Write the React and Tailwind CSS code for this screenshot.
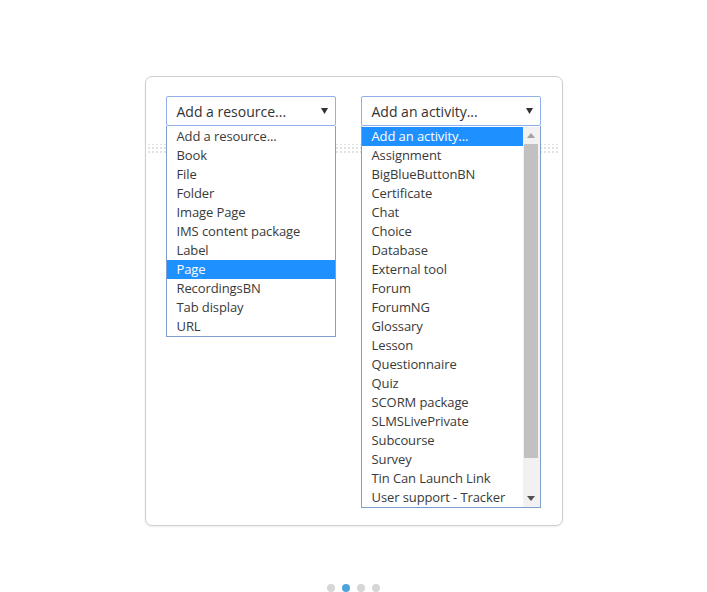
import React from "react";

const resources = ["Add a resource...", "Book", "File", "Folder", "Image Page", "IMS content package", "Label", "Page", "RecordingsBN", "Tab display", "URL"];
const activities = ["Add an activity...", "Assignment", "BigBlueButtonBN", "Certificate", "Chat", "Choice", "Database", "External tool", "Forum", "ForumNG", "Glossary", "Lesson", "Questionnaire", "Quiz", "SCORM package", "SLMSLivePrivate", "Subcourse", "Survey", "Tin Can Launch Link", "User support - Tracker"];

function Caret() {
  return (
    <svg width="7" height="6" viewBox="0 0 7 6" className="shrink-0">
      <path d="M0 0 L7 0 L3.5 6 Z" fill="#333" />
    </svg>
  );
}

function SelectBox({ label }) {
  return (
    <div className="h-[30px] flex items-center justify-between pl-[10px] pr-[7px] bg-white border border-[#8fb0ea] rounded-[2px] text-[14px] text-[#333]">
      <span>{label}</span>
      <Caret />
    </div>
  );
}

function Item({ text, selected }) {
  return (
    <div className={"h-[19px] leading-[19px] pl-[10px] text-[13px] tracking-[-0.1px] whitespace-nowrap " + (selected ? "bg-[#1e90ff] text-white" : "text-[#3a3a3a]")}>
      {text}
    </div>
  );
}

function Dots() {
  return (
    <div className="absolute left-[2px] right-[4px] top-[66px] h-[12px] pointer-events-none">
      <svg width="100%" height="12">
        <defs>
          <pattern id="dp" width="4" height="4" patternUnits="userSpaceOnUse">
            <rect x="0" y="0" width="2" height="2" fill="#e2e2e2" />
          </pattern>
        </defs>
        <rect x="0" y="1" width="100%" height="10" fill="url(#dp)" />
      </svg>
    </div>
  );
}

export default function App() {
  return (
    <div className="w-[707px] h-[592px] bg-white flex flex-col items-center pt-[76px]" style={{ fontFamily: '"Open Sans", "Noto Sans", sans-serif' }}>
      <div className="relative w-[418px] h-[450px] border border-[#cfcfcf] rounded-[7px] bg-white shadow-[0_1px_2px_rgba(0,0,0,0.08)] pt-[19px] pl-[20px] flex gap-[25px]">
        <Dots />
        <div className="relative w-[170px] flex flex-col">
          <SelectBox label="Add a resource..." />
          <div className="bg-white border border-[#7f9fd0] border-t-0 pt-[1px]">
            {resources.map((r) => (
              <Item key={r} text={r} selected={r === "Page"} />
            ))}
          </div>
        </div>
        <div className="relative w-[180px] flex flex-col">
          <SelectBox label="Add an activity..." />
          <div className="bg-white border border-[#7f9fd0] border-t-0 flex pt-[1px]">
            <div className="flex-1 min-w-0">
              {activities.map((a, i) => (
                <Item key={a} text={a} selected={i === 0} />
              ))}
            </div>
            <div className="w-[17px] bg-[#f1f1f1] flex flex-col items-center">
              <div className="h-[17px] flex items-center justify-center">
                <svg width="8" height="5" viewBox="0 0 8 5"><path d="M0 5 L8 5 L4 0 Z" fill="#a3a3a3" /></svg>
              </div>
              <div className="w-[14px] h-[314px] bg-[#c1c1c1]" />
              <div className="flex-1" />
              <div className="h-[17px] flex items-center justify-center">
                <svg width="8" height="5" viewBox="0 0 8 5"><path d="M0 0 L8 0 L4 5 Z" fill="#505050" /></svg>
              </div>
            </div>
          </div>
        </div>
      </div>
      <div className="mt-[58px] flex gap-[7px]">
        <div className="w-[8px] h-[8px] rounded-full bg-[#d6d6d6]" />
        <div className="w-[8px] h-[8px] rounded-full bg-[#4fa3dc]" />
        <div className="w-[8px] h-[8px] rounded-full bg-[#d6d6d6]" />
        <div className="w-[8px] h-[8px] rounded-full bg-[#d6d6d6]" />
      </div>
    </div>
  );
}
